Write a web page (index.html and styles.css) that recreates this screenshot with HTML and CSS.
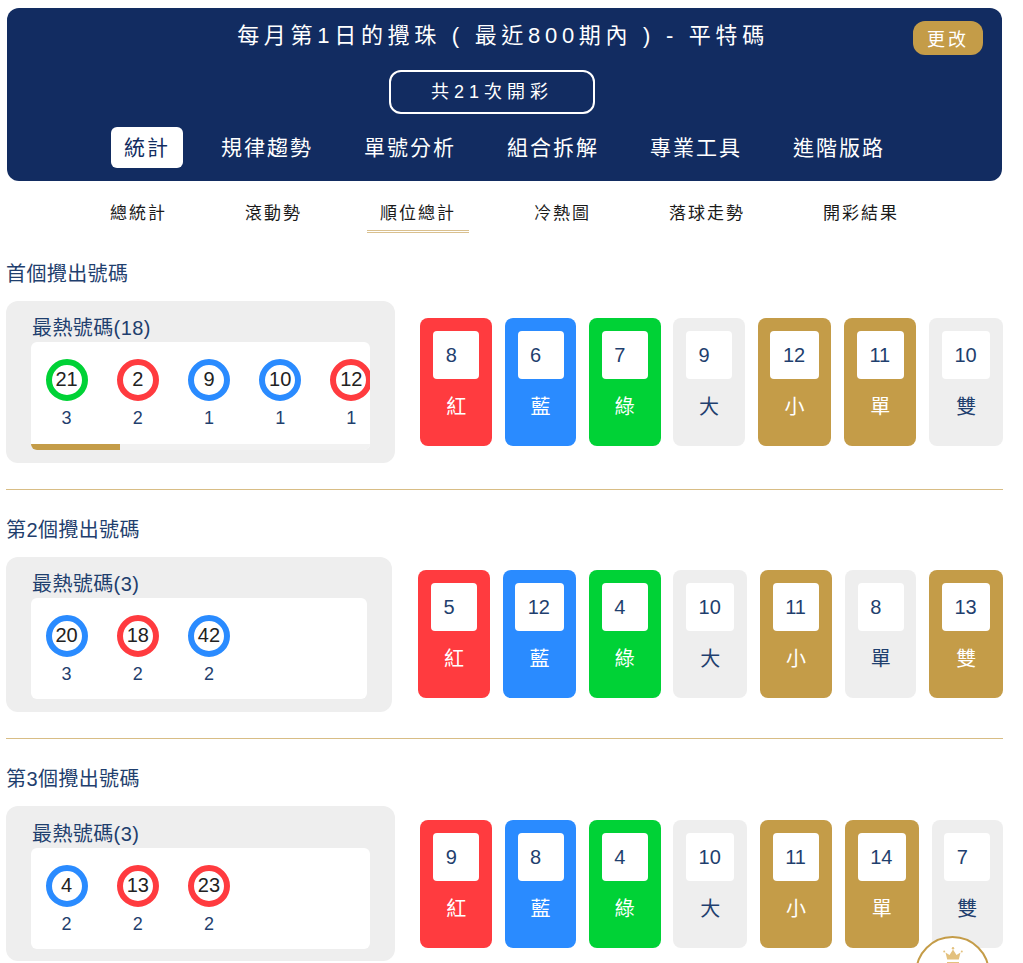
FILE: index.html
```html
<!DOCTYPE html>
<html lang="zh-Hant">
<head>
<meta charset="utf-8">
<title>每月第1日的攪珠</title>
<link rel="stylesheet" href="styles.css">
</head>
<body>
<div class="page">
  <header class="hero">
    <h1 class="hero-title">每月第1日的攪珠 ( 最近800期內 ) - 平特碼</h1>
    <button class="change-btn">更改</button>
    <div class="count-pill">共21次開彩</div>
    <nav class="main-nav">
      <a class="tab tab-active">統計</a>
      <a class="tab">規律趨勢</a>
      <a class="tab">單號分析</a>
      <a class="tab">組合拆解</a>
      <a class="tab">專業工具</a>
      <a class="tab">進階版路</a>
    </nav>
  </header>
  <nav class="sub-nav">
    <a class="sub">總統計</a>
    <a class="sub">滾動勢</a>
    <a class="sub sub-active">順位總計</a>
    <a class="sub">冷熱圖</a>
    <a class="sub">落球走勢</a>
    <a class="sub">開彩結果</a>
  </nav>

  <section class="block block-first">
    <h2 class="block-title">首個攪出號碼</h2>
    <div class="block-row">
      <div class="panel">
        <h3 class="panel-title">最熱號碼(18)</h3>
        <div class="balls-box">
          <div class="balls">
            <div class="ball-item"><span class="ball green">21</span><span class="times">3</span></div>
            <div class="ball-item"><span class="ball red">2</span><span class="times">2</span></div>
            <div class="ball-item"><span class="ball blue">9</span><span class="times">1</span></div>
            <div class="ball-item"><span class="ball blue">10</span><span class="times">1</span></div>
            <div class="ball-item"><span class="ball red">12</span><span class="times">1</span></div>
          </div>
          <div class="track"><div class="thumb"></div></div>
        </div>
      </div>
      <div class="cards">
        <div class="card c-red"><span class="num">8</span><span class="label">紅</span></div>
        <div class="card c-blue"><span class="num">6</span><span class="label">藍</span></div>
        <div class="card c-green"><span class="num">7</span><span class="label">綠</span></div>
        <div class="card c-gray"><span class="num">9</span><span class="label">大</span></div>
        <div class="card c-gold"><span class="num">12</span><span class="label">小</span></div>
        <div class="card c-gold"><span class="num">11</span><span class="label">單</span></div>
        <div class="card c-gray"><span class="num">10</span><span class="label">雙</span></div>
      </div>
    </div>
  </section>

  <section class="block block-second">
    <h2 class="block-title">第2個攪出號碼</h2>
    <div class="block-row">
      <div class="panel">
        <h3 class="panel-title">最熱號碼(3)</h3>
        <div class="balls-box">
          <div class="balls">
            <div class="ball-item"><span class="ball blue">20</span><span class="times">3</span></div>
            <div class="ball-item"><span class="ball red">18</span><span class="times">2</span></div>
            <div class="ball-item"><span class="ball blue">42</span><span class="times">2</span></div>
          </div>
        </div>
      </div>
      <div class="cards">
        <div class="card c-red"><span class="num">5</span><span class="label">紅</span></div>
        <div class="card c-blue"><span class="num">12</span><span class="label">藍</span></div>
        <div class="card c-green"><span class="num">4</span><span class="label">綠</span></div>
        <div class="card c-gray"><span class="num">10</span><span class="label">大</span></div>
        <div class="card c-gold"><span class="num">11</span><span class="label">小</span></div>
        <div class="card c-gray"><span class="num">8</span><span class="label">單</span></div>
        <div class="card c-gold"><span class="num">13</span><span class="label">雙</span></div>
      </div>
    </div>
  </section>

  <section class="block block-third">
    <h2 class="block-title">第3個攪出號碼</h2>
    <div class="block-row">
      <div class="panel">
        <h3 class="panel-title">最熱號碼(3)</h3>
        <div class="balls-box">
          <div class="balls">
            <div class="ball-item"><span class="ball blue">4</span><span class="times">2</span></div>
            <div class="ball-item"><span class="ball red">13</span><span class="times">2</span></div>
            <div class="ball-item"><span class="ball red">23</span><span class="times">2</span></div>
          </div>
        </div>
      </div>
      <div class="cards">
        <div class="card c-red"><span class="num">9</span><span class="label">紅</span></div>
        <div class="card c-blue"><span class="num">8</span><span class="label">藍</span></div>
        <div class="card c-green"><span class="num">4</span><span class="label">綠</span></div>
        <div class="card c-gray"><span class="num">10</span><span class="label">大</span></div>
        <div class="card c-gold"><span class="num">11</span><span class="label">小</span></div>
        <div class="card c-gold"><span class="num">14</span><span class="label">單</span></div>
        <div class="card c-gray"><span class="num">7</span><span class="label">雙</span></div>
      </div>
    </div>
  </section>
</div>
<div class="crown-badge">
  <svg class="crown" viewBox="0 0 22 14" width="22" height="14" aria-hidden="true">
    <path d="M3.5 5.5 7.5 8 11 2.5 14.5 8 18.5 5.5 16.8 12.5H5.2Z" fill="#e3c17e"/>
    <circle cx="11" cy="1.2" r="1.2" fill="#e3c17e"/>
    <circle cx="2.2" cy="4.6" r="1" fill="#e3c17e"/>
    <circle cx="19.8" cy="4.6" r="1" fill="#e3c17e"/>
  </svg>
  <div class="crown-base"></div>
</div>
</body>
</html>
```
FILE: styles.css
```css
* { box-sizing: border-box; }
html, body { margin: 0; padding: 0; background: #fff; }
body {
  height: 963px;
  overflow: hidden;
  font-family: "Liberation Sans", "Noto Sans CJK TC", sans-serif;
  color: #1f3f6e;
}
.page { width: 997px; margin-left: 6px; }

.hero {
  position: relative;
  margin: 8px 0 0 1px;
  width: 995px;
  height: 173px;
  background: #122c61;
  border-radius: 12px;
  color: #fff;
  display: flex;
  flex-direction: column;
  align-items: center;
}
.hero-title {
  margin: 13px 3px 0 0;
  height: 30px;
  line-height: 30px;
  font-size: 22px;
  font-weight: 400;
  letter-spacing: 4.7px;
  white-space: pre;
}
.change-btn {
  position: absolute;
  top: 13px;
  right: 19px;
  width: 70px;
  height: 34px;
  border: 0;
  padding: 0;
  border-radius: 12px;
  background: #c49c48;
  color: #fff;
  font: 400 18px "Liberation Sans", "Noto Sans CJK TC", sans-serif;
  letter-spacing: 3px;
}
.count-pill {
  margin: 19px 25px 0 0;
  width: 206px;
  height: 44px;
  border: 2px solid #fff;
  border-radius: 12px;
  font-size: 18px;
  line-height: 40px;
  letter-spacing: 5px;
  text-align: center;
}
.main-nav { display: flex; gap: 25px; margin-top: 13px; }
.tab {
  height: 41px;
  padding: 0 13px;
  line-height: 41px;
  font-size: 21px;
  letter-spacing: 2px;
  border-radius: 6px;
  white-space: nowrap;
}
.tab-active { background: #fff; color: #122c61; }

.sub-nav { display: flex; justify-content: center; gap: 52px; margin: 15px 0 0 0; height: 38px; }
.sub {
  height: 37px;
  padding: 0 13px;
  line-height: 35px;
  font-size: 17px;
  letter-spacing: 2px;
  color: #1a1a1a;
  white-space: nowrap;
}
.sub-active { border-bottom: 3px double #d9c08f; }

.block { padding-bottom: 26px; border-bottom: 1px solid #d8bd85; }
.block-first { padding-top: 26px; }
.block-second { padding-top: 25.75px; }
.block-third { padding-top: 26.5px; border-bottom: 0; }
.block-title { margin: 0 0 13px; height: 28px; line-height: 28px; font-size: 20px; font-weight: 400; letter-spacing: .4px; }
.block-row { display: flex; align-items: center; gap: 25.8px; }

.panel {
  flex: 1;
  min-width: 0;
  background: #eee;
  border-radius: 12px;
  padding: 14.3px 25px 12.7px;
}
.panel-title { margin: 0 0 0 1px; height: 27px; line-height: 27px; font-size: 20px; font-weight: 400; letter-spacing: .4px; }
.balls-box { background: #fff; border-radius: 6px; overflow: hidden; }
.balls { display: flex; overflow: hidden; height: 101px; padding-top: 17px; }
.ball-item { flex: 0 0 71.2px; display: flex; flex-direction: column; align-items: center; }
.ball {
  width: 42px;
  height: 42px;
  border-radius: 50%;
  border: 6.5px solid;
  background: #fff;
  color: #222;
  font-size: 20px;
  line-height: 29px;
  text-align: center;
}
.green { border-color: #00d236; }
.red { border-color: #ff3b3f; }
.blue { border-color: #2a8bff; }
.times { margin-top: 7px; font-size: 18px; line-height: 20px; }
.track { height: 6px; margin-top: 1px; background: #f2f2f2; }
.thumb { width: 89px; height: 6px; background: #c49c48; }

.cards { display: flex; gap: 12.8px; }
.card {
  height: 128px;
  padding: 13px 12.75px 0;
  border-radius: 8px;
  display: flex;
  flex-direction: column;
  color: #fff;
}
.c-red { background: #ff3b3f; }
.c-blue { background: #2a8bff; }
.c-green { background: #00d236; }
.c-gold { background: #c49c48; }
.c-gray { background: #eee; color: #1f3f6e; }
.num {
  min-width: 46px;
  height: 48px;
  padding: 0 13.5px 0 12.5px;
  background: #fff;
  border-radius: 4px;
  color: #1f3f6e;
  font-size: 20px;
  line-height: 48px;
}
.label { margin-top: 13px; font-size: 20px; line-height: 30px; text-align: center; }

.crown-badge {
  position: fixed;
  left: 915px;
  top: 936px;
  width: 75px;
  height: 75px;
  border-radius: 50%;
  background: #fff;
  border: 2px solid #c49c48;
  display: flex;
  flex-direction: column;
  align-items: center;
  padding-top: 9px;
}
.crown-base { width: 12px; height: 4px; margin-top: 1px; background: #e3c17e; }
```
